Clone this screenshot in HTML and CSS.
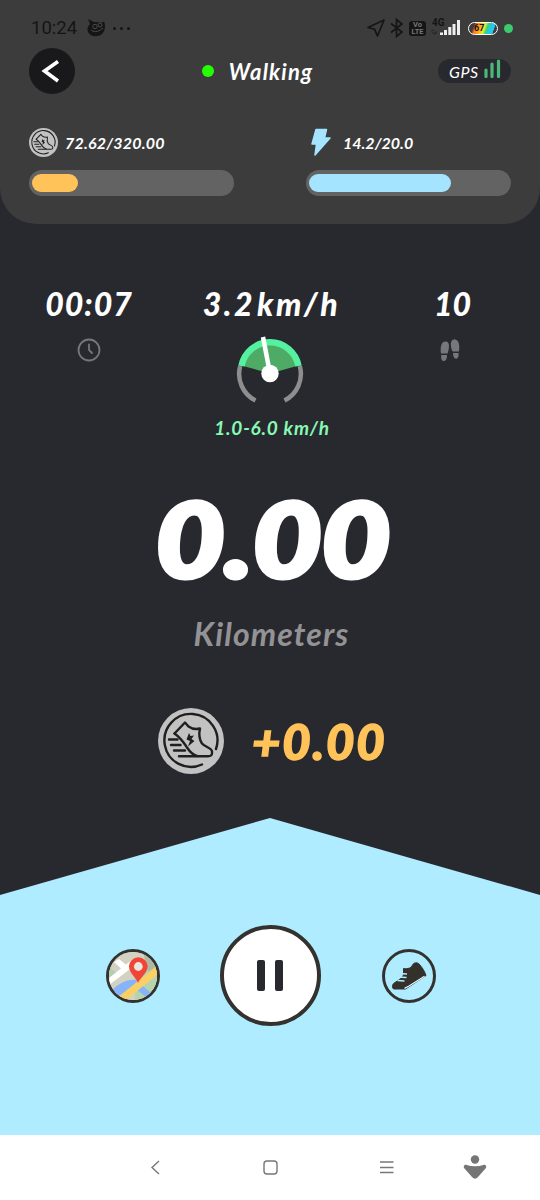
FILE: index.html
```html
<!DOCTYPE html>
<html lang="en">
<head>
    <meta charset="UTF-8">
    <meta name="viewport" content="width=device-width, initial-scale=1.0">
    <title>Walking</title>
    <link rel="stylesheet" href="styles.css">
</head>
<body>
    <svg width="0" height="0" class="defs">
        <!-- coin, used twice -->
        <symbol id="coin" viewBox="0 0 66 66">
            <circle cx="33" cy="33" r="33" fill="#c2c2c3"/>
            <g fill="none" stroke="#1f1f20" stroke-width="2.4" stroke-linecap="round" stroke-linejoin="round">
                <path d="M58 41A26.500 26.500 0 1 0 44 56.500"/>
                <path d="M16.500 25.500L27 14.500L30.500 18.500C34 21 38 21.500 42 20.500C40.500 27 41 31 44 35.500C47 39 54 40 54 43.500C54.500 47 53 48.300 50 48.300H21"/>
                <path d="M16.500 25.500C23 30 26 35 29 39.500C32 44 35 47 39 48"/>
                <path d="M11 31.500H19.500M13 37H22.500M16 42.500H27"/>
            </g>
            <path d="M31 25L28.500 31.500L32 33L30 38.500L36.500 33L33.500 31L36 27.500L32.500 28Z" fill="#1f1f20"/>
        </symbol>
    </svg>
    <div id="app">
        <header>
            <div class="status">
                <span class="time">10:24</span>
                <svg class="cat" width="20" height="20" viewBox="0 0 20 20">
                    <path d="M2 1L8 4L16 4.500L18 3.500C20 8 19 13 16 16C12 19.500 4 19 2 14C0.500 10 2.500 8 4 6Z" fill="#151515"/>
                    <g fill="none" stroke="#4a4a4a" stroke-width="1"><circle cx="9" cy="8.500" r="2.200"/><circle cx="14" cy="7" r="2"/><path d="M5 12C9 15 14 13 17 10"/></g>
                </svg>
                <span class="dots"><i></i><i></i><i></i></span>
                <div class="sys">
                    <svg width="20" height="20" viewBox="0 0 20 20"><path d="M18 2L2 9.500L8.500 11.200L11.500 18Z" fill="none" stroke="#151515" stroke-width="1.700" stroke-linejoin="round"/></svg>
                    <svg width="14" height="20" viewBox="0 0 14 20"><path d="M1 5.500L12 14L6.500 18.500V1.500L12 6L1 14.500" fill="none" stroke="#151515" stroke-width="1.700"/></svg>
                    <span class="volte">Vo<br>LTE</span>
                    <span class="signal">
                        <b>4G</b>
                        <svg width="30" height="17" viewBox="0 0 30 17">
                            <path d="M0 12l3-1M1 14h3M5 12v3M3 16l3-3" stroke="#242424" fill="none"/>
                            <path d="M9 16V13.500h3V16zM13 16V11h3V16zM17.300 16V8h3V16zM21.500 16V5h3V16zM26 16V1h3V16z" fill="#eee"/>
                        </svg>
                    </span>
                    <span class="battery"><b>67</b></span>
                    <span class="live"></span>
                </div>
            </div>
            <div class="title">
                <div class="back">
                    <svg width="46" height="46" viewBox="0 0 46 46"><path d="M29 13.500L15.500 23L29 33" fill="none" stroke="#fff" stroke-width="3.600"/></svg>
                </div>
                <h1><i></i>Walking</h1>
                <div class="gps">GPS
                    <svg width="17" height="19" viewBox="0 0 17 19"><path d="M2 17.500V11M8 17.500V5M14.500 17.500V2" stroke="#4cb877" stroke-width="3.200" stroke-linecap="round"/></svg>
                </div>
            </div>
            <div class="limits">
                <div class="limit">
                    <div class="label"><svg width="29" height="29"><use href="#coin"/></svg><span>72.62/320.00</span></div>
                    <div class="bar"><div class="fill gold" style="width: 46px"></div></div>
                </div>
                <div class="limit">
                    <div class="label energy">
                        <svg width="29" height="29" viewBox="0 0 29 29"><path d="M10 1.500H20.500L18.500 10H24L9 27L10.500 16H6Z" fill="#a5e4ff" stroke="#a5e4ff" stroke-width="1.500" stroke-linejoin="round"/></svg>
                        <span>14.2/20.0</span>
                    </div>
                    <div class="bar"><div class="fill blue" style="width: 142px"></div></div>
                </div>
            </div>
        </header>

        <section class="metrics">
            <div class="metric time-metric">
                <strong>00:07</strong>
                <svg width="24" height="24" viewBox="0 0 24 24"><g fill="none" stroke="#77777b" stroke-width="1.800" stroke-linecap="round"><circle cx="12" cy="12" r="10.500"/><path d="M12 6.500V12L15 15"/></g></svg>
            </div>
            <div class="metric speed">
                <strong>3.2<em>km/h</em></strong>
                <svg width="68" height="70" viewBox="0 0 68 70">
                    <path d="M34 38.500L3.500 30A31.500 31.500 0 0 1 64.500 30Z" fill="#4dab66"/>
                    <path d="M4.200 31A29.800 29.800 0 0 0 19.500 65.500M63.800 31A29.800 29.800 0 0 1 48.500 65.500" fill="none" stroke="#8e8e90" stroke-width="4.500"/>
                    <path d="M5.500 31A29 29 0 0 1 62.500 31" fill="none" stroke="#55f0a0" stroke-width="6.500"/>
                    <path d="M27 2L34 38.500" stroke="#fff" stroke-width="4.500"/>
                    <circle cx="34" cy="38.500" r="8.700" fill="#fff"/>
                </svg>
                <span class="range">1.0-6.0 km/h</span>
            </div>
            <div class="metric steps">
                <strong>10</strong>
                <svg width="24" height="24" viewBox="0 0 24 24">
                    <g fill="#77777b">
                        <path d="M3 15.500C2 10 3 3.500 7.500 3.500C12 3.500 11.500 10 9.500 15.500Z"/>
                        <path d="M3.200 17H9C9 21 8 23 5.500 23C3.500 23 3 20 3.200 17Z"/>
                        <path d="M14.500 13.500C12 8 12 1.500 16.500 1.200C21 1.500 22 8 20.800 13.500Z"/>
                        <path d="M15 15H20.500C21 18.500 20 20.500 18 20.700C16 20.500 15 18.500 15 15Z"/>
                    </g>
                </svg>
            </div>
        </section>

        <section class="distance">
            <div class="value">0.00</div>
            <div class="unit">Kilometers</div>
        </section>

        <section class="earned">
            <svg width="66" height="66"><use href="#coin"/></svg>
            <span>+0.00</span>
        </section>

        <section class="controls">
            <div class="round">
                <svg width="48" height="48" viewBox="0 0 48 48">
                    <rect width="48" height="48" fill="#d3d2c2"/>
                    <path d="M26 24L48 10V48H26Z" fill="#b7d3ad"/>
                    <path d="M34 0H48V14L39 20Z" fill="#b0b8a0"/>
                    <path d="M0 15L9 22L0 29Z" fill="#b2cfae"/>
                    <path d="M0 26L24 7L29 11L0 33ZM5 10L10 7L21 16L16 20Z" fill="#fff"/>
                    <path d="M0 41C10 31 18 27 27 28L42 41L38 46L26 36C18 39 13 42 7 48Z" fill="#86b4fa"/>
                    <path d="M9 45L48 14V23L17 48Z" fill="#fad064"/>
                    <path d="M29 31C27.500 26 20 21 20 14.500A9.300 9.300 0 0 1 38.600 14.500C38.600 21 31 26 29 31Z" fill="#f04537"/>
                    <circle cx="29.300" cy="14.500" r="4.400" fill="#e9e8df"/>
                </svg>
            </div>
            <div class="round pause"><i></i><i></i></div>
            <div class="round">
                <svg width="48" height="48" viewBox="0 0 48 48">
                    <path d="M18.500 16.500C23 17.500 26.500 15.500 27.500 13C29 10.500 32 10 34 12C37 15 39.500 19 41 23.500L20.500 37H8.500C6.500 34.500 7.500 32 10 30.500C14 28 17 26 18.500 23Z" fill="#34312c" stroke="#34312c" stroke-linejoin="round"/>
                    <path d="M14 21.500L22 22M13 25L21.500 25.500M12.500 28.500L19.500 29" stroke="#afecff" stroke-width="1.300"/>
                    <path d="M39.500 24.200L24 34L19.500 36.300" stroke="#dff8ff" stroke-width="1.300" fill="none"/>
                </svg>
            </div>
        </section>

        <nav>
            <svg width="540" height="65" viewBox="0 0 540 65">
                <g fill="none" stroke="#777" stroke-width="1.400">
                    <path d="M159 26L152 32.500L159 39"/>
                    <rect x="264" y="26" width="13" height="13" rx="3"/>
                    <path d="M380 27H393.500M380 32.500H393.500M380 37.500H393.500"/>
                </g>
                <g fill="#757575">
                    <circle cx="475" cy="24.500" r="4.200"/>
                    <path d="M466 29.700Q475 33 484 29.700C486 29.500 487 32 485.500 33.500L478 42Q475 45.500 472 42L464.500 33.500C463 32 464 29.500 466 29.700Z"/>
                </g>
            </svg>
        </nav>
    </div>
</body>
</html>
```
FILE: styles.css
```css
*{
    margin: 0;
    padding: 0;
    box-sizing: border-box;
}
body{
    background: #28292f;
    color: #fff;
    font-family: Lato, "Liberation Sans", sans-serif;
}
svg{
    display: block;
    flex-shrink: 0;
}
.defs{
    position: absolute;
}
#app{
    width: 540px;
    height: 1200px;
    overflow: hidden;
    display: flex;
    flex-direction: column;
}
header{
    height: 224px;
    padding: 0 29px;
    background: #3c3c3c;
    border-radius: 0 0 36px 36px;
    flex-shrink: 0;
}

/* status bar */
.status{
    height: 48px;
    padding-top: 8px;
    display: flex;
    align-items: center;
    color: #151515;
    margin-right: -2px;
}
.time{
    font: 18.5px Roboto, sans-serif;
    width: 48px;
    margin: 0 7px 0 2px;
    white-space: nowrap;
}
.dots{
    display: flex;
    gap: 4px;
    margin-left: 7px;
}
.dots i{
    width: 3px;
    height: 3px;
    border-radius: 50%;
    background: #151515;
}
.sys{
    display: flex;
    align-items: center;
    margin-left: auto;
}
.sys > svg + svg{
    margin: 0 5px 0 4px;
}
.volte{
    width: 17px;
    height: 15px;
    border-radius: 3px;
    background: #151515;
    color: #777;
    font: bold 7.5px/7px Roboto, sans-serif;
    text-align: center;
}
.signal{
    position: relative;
    margin: -1px 7px 0 5px;
}
.signal b{
    position: absolute;
    left: 1px;
    top: -1px;
    font: bold 10px/10px Roboto, sans-serif;
}
.battery{
    width: 30px;
    height: 13px;
    padding: 1px 4px;
    border: 1.5px solid #fff;
    border-radius: 7px;
    background: linear-gradient(110deg, #3c3c3c 18%, #ff7a1a 25%, #ffb21c 42%, #e7ef38 53%, #35d66c 62%, #25c6f0 72%, #27c8e8 84%, #3c3c3c 86%);
}
.battery b{
    display: block;
    font: bold 9px/8px Roboto, sans-serif;
    margin-left: 1px;
}
.live{
    width: 9px;
    height: 9px;
    margin-left: 6px;
    border-radius: 50%;
    background: #38cc6c;
}

/* title */
.title{
    height: 46px;
    display: flex;
    align-items: center;
    justify-content: space-between;
}
.back{
    width: 46px;
    height: 46px;
    border-radius: 50%;
    background: #19191b;
}
h1{
    display: flex;
    align-items: center;
    font-size: 22px;
    font-style: italic;
    font-weight: 700;
    letter-spacing: 1.2px;
    margin-left: 2px;
}
h1 i{
    width: 12px;
    height: 12px;
    border-radius: 50%;
    background: #25fc05;
    margin-right: 15px;
}
.gps{
    width: 73px;
    height: 24px;
    padding-left: 11px;
    border-radius: 12px;
    background: #28292f;
    display: flex;
    align-items: center;
    gap: 5px;
    font-size: 16px;
    font-style: italic;
    letter-spacing: 0.5px;
}
.gps svg{
    margin-top: -6px;
}

/* limits */
.limits{
    display: flex;
    justify-content: space-between;
    padding-top: 34px;
}
.limit{
    width: 205px;
}
.label{
    height: 29px;
    display: flex;
    align-items: center;
    gap: 7px;
    font-size: 16px;
    font-style: italic;
    font-weight: 700;
    letter-spacing: 0.2px;
}
.energy{
    gap: 8px;
    letter-spacing: 0;
}
.bar{
    height: 26px;
    margin-top: 13px;
    padding: 4px 3px;
    border-radius: 13px;
    background: #636363;
}
.fill{
    height: 18px;
    border-radius: 9px;
}
.gold{
    background: #ffc35a;
}
.blue{
    background: #a5e4ff;
}

/* metrics */
.metrics{
    height: 252px;
    padding: 60px 0 0;
    display: grid;
    grid-template-columns: 180px 180px 180px;
    flex-shrink: 0;
}
.metric{
    display: flex;
    flex-direction: column;
    align-items: center;
}
.time-metric{
    padding-right: 2px;
}
.metric strong{
    height: 40px;
    font-size: 32px;
    line-height: 40px;
    font-weight: 900;
    font-style: italic;
    letter-spacing: 1px;
    white-space: nowrap;
}
.speed strong{
    letter-spacing: 2.5px;
    margin-left: 3px;
}
.steps strong{
    margin-left: 5px;
    letter-spacing: 0;
}
.metric strong + svg{
    margin-top: 14px;
}
.speed strong + svg{
    margin-top: 11px;
}
.metric em{
    margin-left: 2px;
}
.range{
    margin-top: 11px;
    margin-left: 4px;
    color: #86f9b4;
    font-size: 19px;
    line-height: 24px;
    font-weight: 700;
    font-style: italic;
    letter-spacing: 0.8px;
}

/* distance */
.distance{
    text-align: center;
    font-style: italic;
    height: 232px;
    flex-shrink: 0;
}
.value{
    height: 124px;
    font-size: 103px;
    line-height: 123px;
    font-weight: 900;
    -webkit-text-stroke: 5px #fff;
    transform: translateX(3px) scaleX(1.15);
}
.unit{
    margin-top: 12px;
    padding-left: 3px;
    color: #939396;
    font-size: 32px;
    line-height: 44px;
    font-weight: 700;
    letter-spacing: 1.1px;
}
.earned{
    height: 66px;
    padding-left: 158px;
    display: flex;
    align-items: center;
    flex-shrink: 0;
}
.earned span{
    margin-left: 28px;
    color: #ffc35a;
    font-size: 49px;
    font-style: italic;
    font-weight: 900;
    letter-spacing: 1.8px;
    -webkit-text-stroke: 1.5px #ffc35a;
}

/* controls */
.controls{
    height: 317px;
    margin-top: 44px;
    padding: 107px 104px 0 106px;
    display: flex;
    align-items: flex-start;
    justify-content: space-between;
    background: #afecff;
    clip-path: polygon(0 77px, 50% 0, 100% 77px, 100% 100%, 0 100%);
    flex-shrink: 0;
}
.round{
    width: 54px;
    height: 54px;
    margin-top: 24px;
    border: 3px solid #34322e;
    border-radius: 50%;
    overflow: hidden;
}
.pause{
    width: 101px;
    height: 101px;
    margin: 0 2px 0 0;
    border-width: 4px;
    background: #fff;
    display: flex;
    align-items: center;
    justify-content: center;
    gap: 10px;
}
.pause i{
    width: 8px;
    height: 31px;
    border-radius: 2px;
    background: #28292f;
}
nav{
    height: 65px;
    background: #fff;
    flex-shrink: 0;
}
```
